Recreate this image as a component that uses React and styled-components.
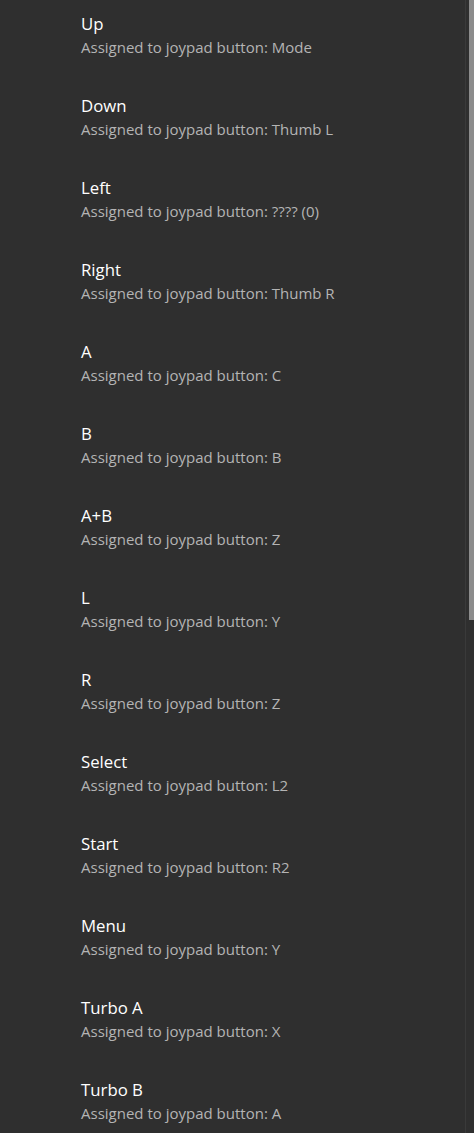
import React from "react";
import styled, { createGlobalStyle } from "styled-components";

const Global = createGlobalStyle`
  html, body {
    margin: 0;
    padding: 0;
    background: #2f2f2f;
  }
  body {
    font-family: "Open Sans", "Noto Sans", sans-serif;
  }
`;

const Page = styled.div`
  position: relative;
  width: 474px;
  height: 1133px;
  overflow: hidden;
  background: #2f2f2f;
`;

const List = styled.div`
  display: flex;
  flex-direction: column;
  gap: 35px;
  padding: 12px 0 0 81px;
`;

const Item = styled.div`
  display: flex;
  flex-direction: column;
  gap: 1px;
`;

const Title = styled.div`
  color: #ffffff;
  font-size: 16.8px;
  line-height: 23px;
`;

const Sub = styled.div`
  color: #b4b4b4;
  font-size: 15px;
  line-height: 23px;
`;

const Track = styled.div`
  position: absolute;
  top: 0;
  right: 0;
  width: 8px;
  height: 100%;
  border-left: 1px solid #3a3a3a;
`;

const Thumb = styled.div`
  position: absolute;
  top: 0;
  right: 0;
  width: 5px;
  height: 620px;
  background: #8c8c8c;
`;

const bindings = [
  ["Up", "Mode"],
  ["Down", "Thumb L"],
  ["Left", "???? (0)"],
  ["Right", "Thumb R"],
  ["A", "C"],
  ["B", "B"],
  ["A+B", "Z"],
  ["L", "Y"],
  ["R", "Z"],
  ["Select", "L2"],
  ["Start", "R2"],
  ["Menu", "Y"],
  ["Turbo A", "X"],
  ["Turbo B", "A"],
];

export default function App() {
  return (
    <Page>
      <Global />
      <List>
        {bindings.map(([name, btn]) => (
          <Item key={name}>
            <Title>{name}</Title>
            <Sub>Assigned to joypad button: {btn}</Sub>
          </Item>
        ))}
      </List>
      <Track>
        <Thumb />
      </Track>
    </Page>
  );
}
